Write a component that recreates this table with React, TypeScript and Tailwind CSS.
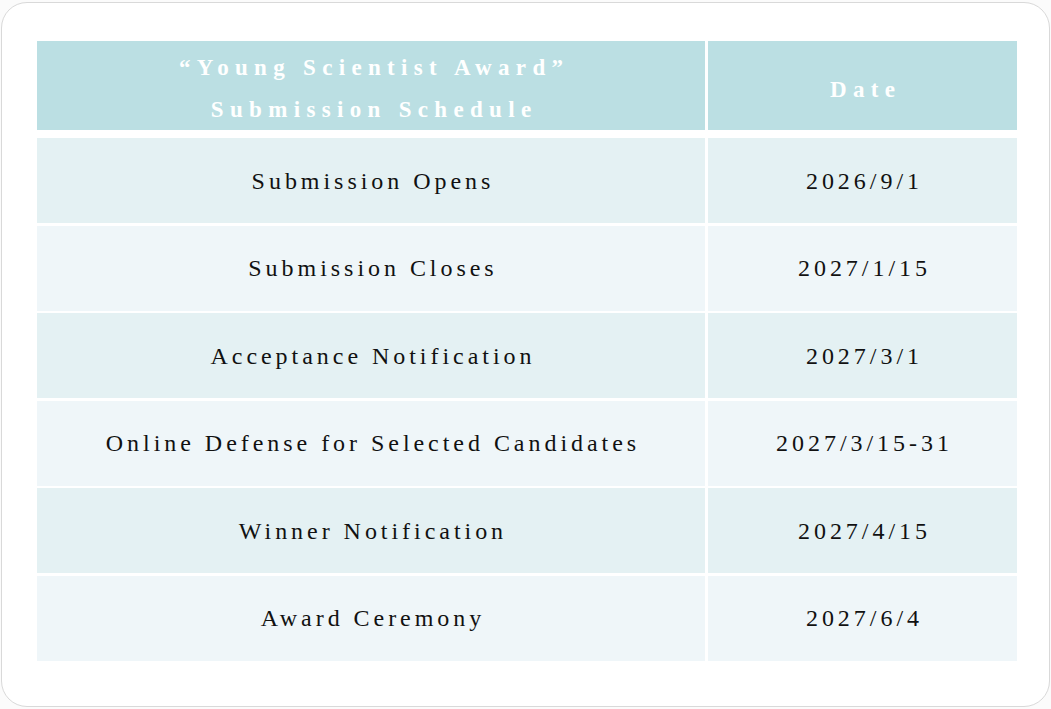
const ROWS = [
  { event: "Submission Opens", date: "2026/9/1" },
  { event: "Submission Closes", date: "2027/1/15" },
  { event: "Acceptance Notification", date: "2027/3/1" },
  { event: "Online Defense for Selected Candidates", date: "2027/3/15-31" },
  { event: "Winner Notification", date: "2027/4/15" },
  { event: "Award Ceremony", date: "2027/6/4" },
];

export default function App() {
  return (
    <div className="w-[1051px] h-[709px] bg-[#fbfbfb] pt-[2px] pl-[1px] font-[Liberation_Serif,Times_New_Roman,serif]">
      <div className="w-[1049px] h-[705px] rounded-[26px] border border-[#d9d9d9] bg-white pt-[38px] pl-[35px]">
        <div className="grid grid-cols-[668px_309px] gap-x-[3px]">
          {/* Header */}
          <div className="h-[89px] bg-[#bbdfe3] flex justify-center text-center pt-[6px]">
            <div className="text-white font-bold text-[23px] leading-[42px] tracking-[0.275em] pl-[0.275em]">
              “Young Scientist Award”
              <br />
              Submission Schedule
            </div>
          </div>
          <div className="h-[89px] bg-[#bbdfe3] flex justify-center pt-[28px]">
            <span className="text-white font-bold text-[23px] leading-[42px] tracking-[0.275em] pl-[0.275em] h-[42px]">
              Date
            </span>
          </div>
        </div>

        <div className="mt-[8px] grid grid-cols-[668px_309px] gap-x-[3px] gap-y-[2.5px]">
          {ROWS.map((r, i) => {
            const bg = i % 2 === 0 ? "bg-[#e4f1f3]" : "bg-[#eff6f9]";
            return [
              <div
                key={`e${i}`}
                className={`h-[85px] ${bg} flex items-center justify-center text-[24px] text-[#111] tracking-[0.165em] pl-[0.165em]`}
              >
                {r.event}
              </div>,
              <div
                key={`d${i}`}
                className={`h-[85px] ${bg} flex items-center justify-center text-[24px] text-[#111] tracking-[0.165em] pl-[0.165em]`}
              >
                {r.date}
              </div>,
            ];
          })}
        </div>
      </div>
    </div>
  );
}
